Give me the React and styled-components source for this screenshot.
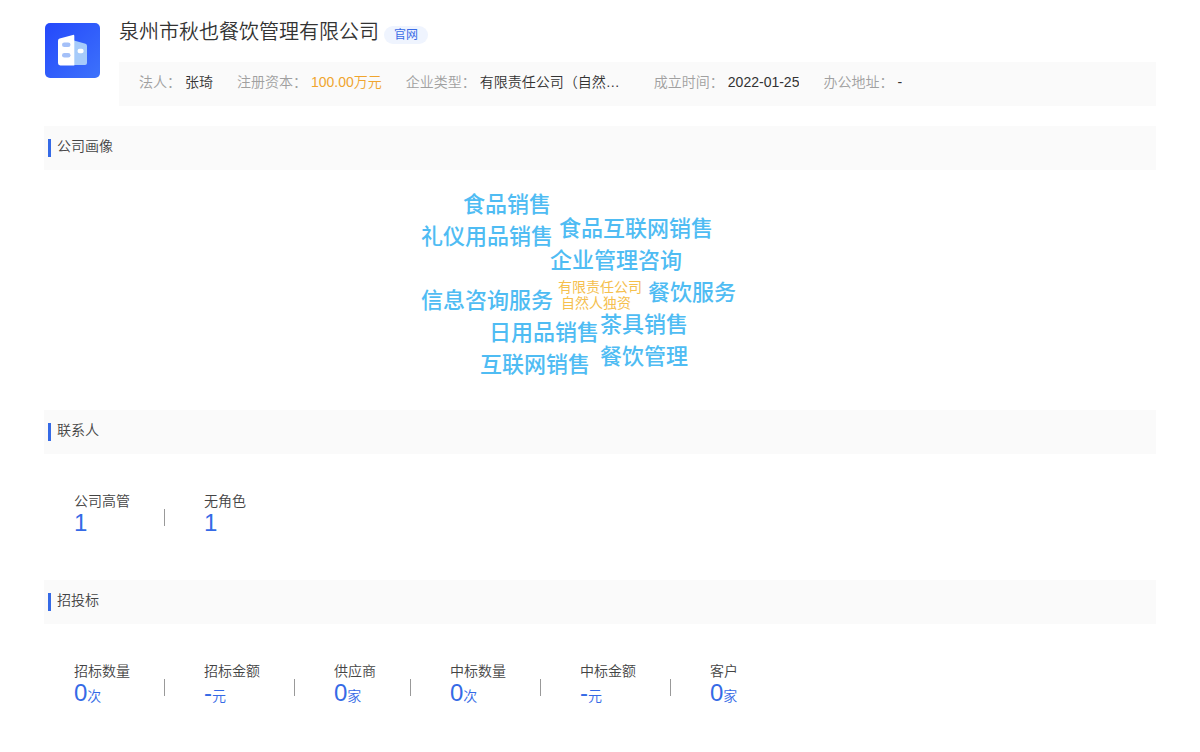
import React from 'react'
import styled, { createGlobalStyle } from 'styled-components'

const GlobalStyle = createGlobalStyle`
  * {
    box-sizing: border-box;
  }

  body {
    margin: 0;
    background: #fff;
    color: #444;
    font-family: "Liberation Sans", "Noto Sans CJK SC", sans-serif;
    font-size: 14px;
    line-height: 20px;
  }

  h1, h2, dl, dt, dd, ul {
    margin: 0;
    padding: 0;
    font-weight: 350;
  }
`

const Page = styled.main`
  padding: 18px 44px 0;
`

const Header = styled.header`
  display: flex;
  gap: 19px;
  margin-bottom: 20px;
`

const Logo = styled.svg`
  flex: none;
  width: 56px;
  height: 56px;
  margin-top: 4px;
`

const HeaderBody = styled.div`
  flex: 1;
  min-width: 0;
`

const TitleRow = styled.div`
  display: flex;
  align-items: center;
  gap: 5px;
  height: 44px;
  padding-bottom: 16px;
`

const Title = styled.h1`
  font-size: 20px;
  line-height: 28px;
  color: #333;
`

const SiteLink = styled.a`
  height: 18px;
  margin-top: 6px;
  padding: 0 10px;
  border-radius: 9px;
  background: #eff4fe;
  color: #3a6be6;
  font-size: 12px;
  line-height: 18px;
  text-decoration: none;
`

const InfoBar = styled.dl`
  display: flex;
  flex-wrap: wrap;
  gap: 0 24px;
  padding: 10px 20px 14px;
  background: #fafafa;
`

const InfoItem = styled.div`
  display: flex;
  gap: 4px;
`

const InfoLabel = styled.dt`
  color: #a0a0a0;
`

const InfoValue = styled.dd`
  max-width: 150px;
  overflow: hidden;
  text-overflow: ellipsis;
  white-space: nowrap;
  color: ${props => (props.$highlight ? '#f0a52e' : '#333')};
`

const SectionTitle = styled.h2`
  display: flex;
  align-items: flex-start;
  height: 44px;
  padding: 10px 4px;
  background: #fafafa;
  font-size: 14px;
  line-height: 20px;

  &::before {
    content: '';
    width: 3px;
    height: 18px;
    margin: 3px 6px 0 0;
    background: #356ae6;
  }
`

const Cloud = styled.ul`
  position: relative;
  width: 400px;
  height: 240px;
  margin: 0 auto;
  list-style: none;
`

const Word = styled.li`
  position: absolute;
  left: ${props => props.$x}px;
  top: ${props => props.$y}px;
  white-space: nowrap;
  color: ${props => (props.$small ? '#f5c04e' : '#4fbcf3')};
  font-size: ${props => (props.$small ? 14 : 22)}px;
  line-height: ${props => (props.$small ? 16 : 32)}px;
  font-weight: ${props => (props.$small ? 400 : 500)};
`

const Stats = styled.dl`
  display: flex;
  flex-wrap: wrap;
  padding: 36px 30px 46px;
`

const Stat = styled.div`
  display: flex;
  align-items: flex-start;

  &:not(:last-child)::after {
    content: '';
    width: 1px;
    height: 17px;
    margin: 19px 39px 0 34px;
    background: #999;
  }
`

const StatLabel = styled.dt`
  line-height: 22px;
`

const StatValue = styled.dd`
  height: 22px;
  color: #356ae6;
  font-size: 24px;
  line-height: 22px;
`

const Unit = styled.span`
  font-size: 14px;
`

const info = [
  { label: '法人', value: '张琦' },
  { label: '注册资本', value: '100.00万元', highlight: true },
  { label: '企业类型', value: '有限责任公司（自然人独资）' },
  { label: '成立时间', value: '2022-01-25' },
  { label: '办公地址', value: '-' },
]

const words = [
  { text: '食品销售', x: 63, y: 19 },
  { text: '食品互联网销售', x: 159, y: 43 },
  { text: '礼仪用品销售', x: 21, y: 51 },
  { text: '企业管理咨询', x: 150, y: 75 },
  { text: '有限责任公司', x: 158, y: 109, small: true },
  { text: '自然人独资', x: 161, y: 125, small: true },
  { text: '餐饮服务', x: 248, y: 107 },
  { text: '信息咨询服务', x: 21, y: 115 },
  { text: '茶具销售', x: 200, y: 139 },
  { text: '日用品销售', x: 89, y: 147 },
  { text: '餐饮管理', x: 200, y: 171 },
  { text: '互联网销售', x: 80, y: 179 },
]

const contacts = [
  { label: '公司高管', value: '1' },
  { label: '无角色', value: '1' },
]

const bids = [
  { label: '招标数量', value: '0', unit: '次' },
  { label: '招标金额', value: '-', unit: '元' },
  { label: '供应商', value: '0', unit: '家' },
  { label: '中标数量', value: '0', unit: '次' },
  { label: '中标金额', value: '-', unit: '元' },
  { label: '客户', value: '0', unit: '家' },
]

const CompanyLogo = () => (
  <Logo viewBox="0 0 56 56" aria-hidden="true">
    <defs>
      <linearGradient id="logoBg" x1="0" y1="0" x2="1" y2="1">
        <stop offset="0" stopColor="#2448fb" />
        <stop offset="1" stopColor="#3d72fb" />
      </linearGradient>
    </defs>
    <rect x="1" y="1" width="55" height="55" rx="5" fill="url(#logoBg)" />
    <path d="M30 18.500 L41.500 21.700 Q43 22.200 43 23.800 V41 Q43 43 41 43 H30 Z" fill="#a6cbfa" />
    <path d="M15.700 16.400 L28.800 12.900 Q30.300 12.500 30.300 14 V43.400 H16.300 Q14 43.400 14 41 V18.600 Q14 16.900 15.700 16.400 Z" fill="#fff" />
    <rect x="18" y="20.500" width="8.500" height="4.600" rx="2.300" fill="#a4c0f8" />
    <rect x="18" y="31" width="8.500" height="4.600" rx="2.300" fill="#a4c0f8" />
    <rect x="33.500" y="26.800" width="6.200" height="4.400" rx="2.200" fill="#fff" />
  </Logo>
)

const StatList = ({ items }) => (
  <Stats>
    {items.map(item => (
      <Stat key={item.label}>
        <div>
          <StatLabel>{item.label}</StatLabel>
          <StatValue>
            {item.value}
            {item.unit && <Unit>{item.unit}</Unit>}
          </StatValue>
        </div>
      </Stat>
    ))}
  </Stats>
)

const App = () => (
  <Page>
    <GlobalStyle />
    <Header>
      <CompanyLogo />
      <HeaderBody>
        <TitleRow>
          <Title>泉州市秋也餐饮管理有限公司</Title>
          <SiteLink href="#">官网</SiteLink>
        </TitleRow>
        <InfoBar>
          {info.map(item => (
            <InfoItem key={item.label}>
              <InfoLabel>{item.label}：</InfoLabel>
              <InfoValue $highlight={item.highlight}>{item.value}</InfoValue>
            </InfoItem>
          ))}
        </InfoBar>
      </HeaderBody>
    </Header>

    <section>
      <SectionTitle>公司画像</SectionTitle>
      <Cloud>
        {words.map(word => (
          <Word key={word.text} $x={word.x} $y={word.y} $small={word.small}>
            {word.text}
          </Word>
        ))}
      </Cloud>
    </section>

    <section>
      <SectionTitle>联系人</SectionTitle>
      <StatList items={contacts} />
    </section>

    <section>
      <SectionTitle>招投标</SectionTitle>
      <StatList items={bids} />
    </section>
  </Page>
)

export default App
